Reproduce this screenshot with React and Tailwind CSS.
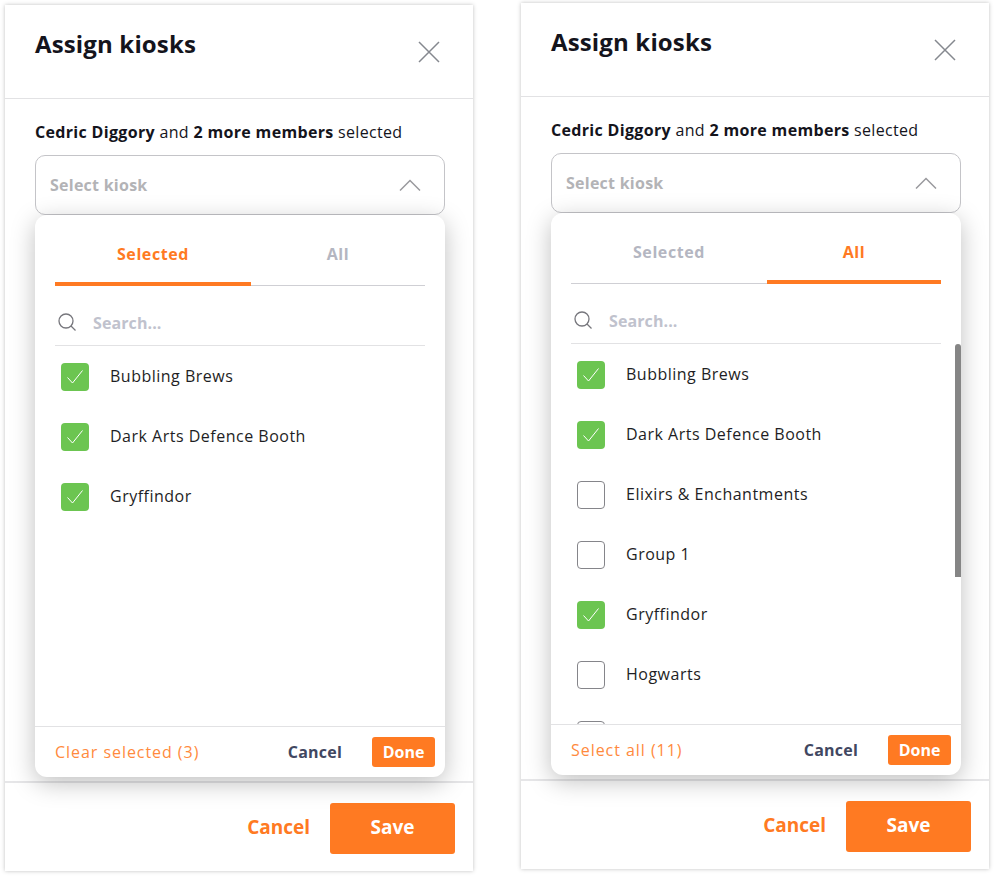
import React from 'react';

const selectedKiosks = [
    { name: 'Bubbling Brews', checked: true },
    { name: 'Dark Arts Defence Booth', checked: true },
    { name: 'Gryffindor', checked: true },
];

// the seventh row only peeks out above the footer, its label is below the fold
const allKiosks = [
    { name: 'Bubbling Brews', checked: true },
    { name: 'Dark Arts Defence Booth', checked: true },
    { name: 'Elixirs & Enchantments', checked: false },
    { name: 'Group 1', checked: false },
    { name: 'Gryffindor', checked: true },
    { name: 'Hogwarts', checked: false },
    { name: '', checked: false },
];

const KioskRow = ({ kiosk }) => (
    <div className="flex h-[60px] shrink-0 items-center pl-[26px]">
        {kiosk.checked ? (
            <span className="mt-[2px] flex h-7 w-7 items-center justify-center rounded-[4px] bg-[#6cc551]">
                <svg width="18" height="16" viewBox="0 0 18 16" fill="none" stroke="#fff" strokeWidth="1">
                    <path d="M1.5 8.5 L6.5 14 L16.5 1.5" />
                </svg>
            </span>
        ) : (
            <span className="mt-[2px] h-7 w-7 rounded-[4px] border border-[#85858a] bg-white" />
        )}
        <span className="ml-[21px] text-[16px] tracking-[0.5px] text-[#1e1e24]">{kiosk.name}</span>
    </div>
);

const Tab = ({ label, active, widthClass }) => (
    <div className={`relative flex h-full items-center justify-center pt-[8px] ${widthClass}`}>
        <span className={`text-[16px] font-bold tracking-[0.6px] ${active ? 'text-[#ff7a22]' : 'text-[#b4b6c1]'}`}>{label}</span>
        {active && <div className="absolute bottom-[-1px] left-0 right-0 h-1 bg-[#ff7a22]" />}
    </div>
);

const KioskPanel = ({ activeTab, kiosks, footerLabel, showScrollbar, className }) => (
    <div className={`flex h-[866px] w-[468px] shrink-0 flex-col bg-white shadow-[0_0_4px_rgba(0,0,0,0.25)] ${className}`}>
        <div className="flex h-[94px] shrink-0 items-start justify-between border-b border-[#e2e2e4] pl-[30px] pr-[33px]">
            <h1 className="mt-[21px] text-[24px] font-bold leading-[36px] tracking-[0.15px] text-[#14141c]">Assign kiosks</h1>
            <svg className="mt-[36px]" width="22" height="22" viewBox="0 0 22 22" fill="none" stroke="#85888f" strokeWidth="1.5">
                <path d="M1 1 L21 21 M21 1 L1 21" />
            </svg>
        </div>

        <div className="relative flex-1 px-[30px] pt-[22px]">
            <p className="whitespace-nowrap text-[16px] leading-[22px] tracking-[0.33px] text-[#14141c]">
                <span className="font-bold">Cedric Diggory</span> and <span className="font-bold">2 more members</span> selected
            </p>
            <div className="mt-[12px] flex h-[60px] w-[410px] items-center justify-between rounded-[10px] border border-[#c4c4c8] pl-[14px] pr-[23px]">
                <span className="text-[16px] font-bold tracking-[0.25px] text-[#b3b3b6]">Select kiosk</span>
                <svg width="22" height="12" viewBox="0 0 22 12" fill="none" stroke="#9a9a9e" strokeWidth="1.5">
                    <path d="M1 11.5 L11 1.5 L21 11.5" />
                </svg>
            </div>

            <div className="absolute left-[30px] top-[116px] flex h-[562px] w-[410px] flex-col overflow-hidden rounded-[12px] bg-white shadow-[0_6px_24px_rgba(0,0,0,0.25)]">
                <div className="mx-5 flex h-[71px] shrink-0 border-b border-[#cfcfd4]">
                    <Tab label="Selected" active={activeTab === 'selected'} widthClass="w-[196px]" />
                    <Tab label="All" active={activeTab === 'all'} widthClass="w-[174px]" />
                </div>
                <div className="mx-5 flex h-[60px] shrink-0 items-center border-b border-[#e2e2e4] pl-[2px] pt-[13px]">
                    <svg width="20" height="20" viewBox="0 0 20 20" fill="none" stroke="#76767c" strokeWidth="1.3">
                        <circle cx="9" cy="9" r="7" />
                        <path d="M14 14 L18.5 18.5" />
                    </svg>
                    <span className="ml-[16px] mt-[2px] text-[16px] font-bold tracking-[0.1px] text-[#c0c2cd]">Search...</span>
                </div>
                <div className="flex-1 overflow-hidden">
                    {kiosks.map((kiosk, idx) => (
                        <KioskRow key={idx} kiosk={kiosk} />
                    ))}
                </div>
                <div className="flex h-[51px] shrink-0 items-center justify-between border-t border-[#e2e2e4] pl-5 pr-[10px]">
                    <span className="text-[16px] tracking-[0.95px] text-[#ff8a3d]">{footerLabel}</span>
                    <div className="flex items-center">
                        <span className="text-[16px] font-bold tracking-[0.2px] text-[#414761]">Cancel</span>
                        <span className="ml-[30px] flex h-[30px] w-[63px] items-center justify-center rounded-[3px] bg-[#ff7a22] text-[16px] font-bold text-white">Done</span>
                    </div>
                </div>
                {showScrollbar && <div className="absolute right-0 top-[131px] h-[233px] w-[6px] rounded-t-[3px] bg-[#858585]" />}
            </div>
        </div>

        <div className="flex h-[90px] shrink-0 items-center justify-end border-t-2 border-[#e6e6e8] pr-[18px] pt-[2px]">
            <span className="mb-[2px] text-[19px] font-bold text-[#ff7a22]">Cancel</span>
            <span className="ml-[20px] flex h-[51px] w-[125px] items-center justify-center rounded-[3px] bg-[#ff7a22] pb-[2px] text-[19px] font-bold text-white">Save</span>
        </div>
    </div>
);

const App = () => (
    <div className="flex h-[876px] w-[994px] items-start gap-[48px] overflow-hidden bg-white pl-[5px] font-['Open_Sans',sans-serif]">
        <KioskPanel className="mt-[5px]" activeTab="selected" kiosks={selectedKiosks} footerLabel="Clear selected (3)" />
        <KioskPanel className="mt-[3px]" activeTab="all" kiosks={allKiosks} footerLabel="Select all (11)" showScrollbar />
    </div>
);

export default App;
